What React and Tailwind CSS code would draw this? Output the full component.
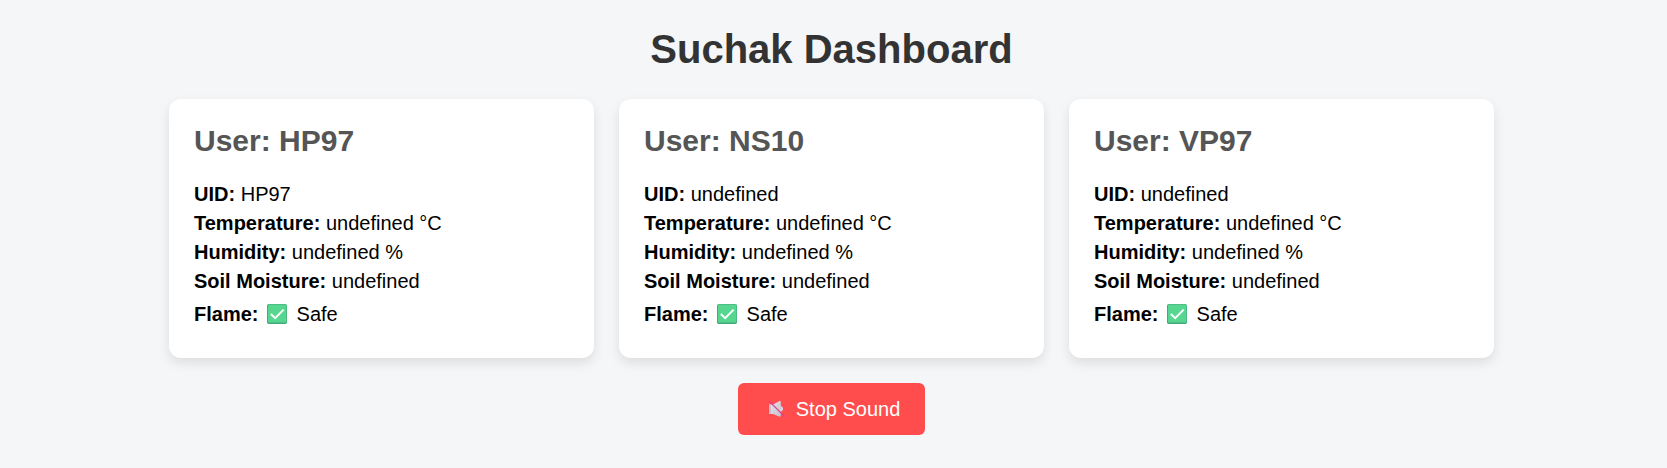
const users = [
  { name: "HP97", uid: "HP97" },
  { name: "NS10", uid: "undefined" },
  { name: "VP97", uid: "undefined" },
];

function CheckIcon() {
  return (
    <svg viewBox="0 0 20 20" className="mr-1 ml-[3px] inline-block size-5 align-[-3px]" role="img" aria-label="OK">
      <rect width="20" height="20" rx="1.8" fill="#45a87c" />
      <rect x="1" y="0.6" width="18.4" height="18" rx="1.2" fill="#56d68f" />
      <path d="M3.8 10 8.2 14.2 16.6 5.6" fill="none" stroke="#fff" strokeWidth="2" />
    </svg>
  );
}

function MutedIcon() {
  return (
    <svg viewBox="0 0 18 18" className="inline-block size-[18px]" aria-hidden="true">
      <defs>
        <linearGradient id="cone" x1="0" y1="0" x2="1" y2="1">
          <stop offset="0" stopColor="#e9e5ee" />
          <stop offset="1" stopColor="#c6bfce" />
        </linearGradient>
      </defs>
      <path d="M12 6q3 .3 3 2.800T12 11.800z" fill="#dcd6e2" />
      <path d="M1 4.500h4.200L11 1.200q1.800-.8 1.800 1v13.300q0 1.800-1.800 1L5.200 14H1z" fill="url(#cone)" />
      <path d="M1 4.500h1.800V14H1z" fill="#c4bccd" />
      <path d="m1.500 1.500 15.200 15.200" stroke="#e03f8c" strokeWidth="1.200" />
    </svg>
  );
}

function Reading({ label, children }) {
  return (
    <div>
      <strong>{label}:</strong> {children}
    </div>
  );
}

function UserCard({ user }) {
  return (
    <section className="rounded-xl bg-white px-[25px] pt-[25px] pb-[29px] shadow-[0_5px_12px_rgba(0,0,0,0.1)]">
      <h2 className="mb-[22px] text-[30px] leading-[34px] font-bold text-[#555]">User: {user.name}</h2>
      <div className="text-xl leading-[29px] text-black">
        <Reading label="UID">{user.uid}</Reading>
        <Reading label="Temperature">undefined °C</Reading>
        <Reading label="Humidity">undefined %</Reading>
        <Reading label="Soil Moisture">undefined</Reading>
        <div className="pt-1">
          <Reading label="Flame">
            <CheckIcon /> Safe
          </Reading>
        </div>
      </div>
    </section>
  );
}

export default function App() {
  return (
    <main className="min-h-screen bg-[#f4f6f8] pt-[25px] pr-[29px] pb-8 pl-[25px] font-['Liberation_Sans',Arial,sans-serif]">
      <h1 className="mb-[25px] text-center text-[40px] leading-[49px] font-bold text-[#333]">Suchak Dashboard</h1>
      <div className="mx-auto grid max-w-[1325px] grid-cols-[repeat(auto-fit,minmax(300px,1fr))] gap-[25px]">
        {users.map((user) => (
          <UserCard key={user.name} user={user} />
        ))}
      </div>
      <div className="mt-[25px] flex justify-center">
        <button type="button" className="flex h-[52px] items-center gap-2.5 rounded-md bg-[#ff4d4d] pr-[25px] pl-[30px] text-xl text-white">
          <MutedIcon />
          Stop Sound
        </button>
      </div>
    </main>
  );
}
